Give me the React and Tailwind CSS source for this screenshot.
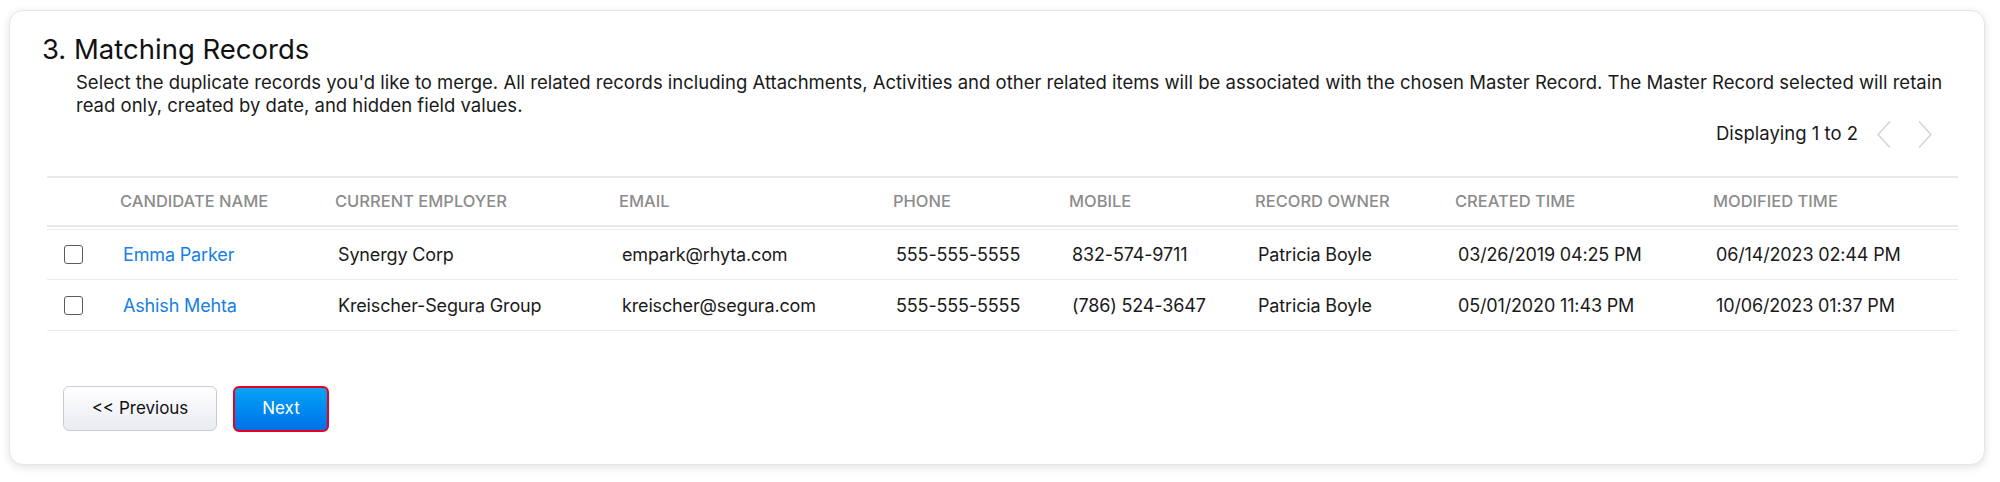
import React from "react";

const cols = "grid-cols-[73px_215px_284px_274px_176px_186px_200px_258px_245px]";

const headers = [
  "CANDIDATE NAME",
  "CURRENT EMPLOYER",
  "EMAIL",
  "PHONE",
  "MOBILE",
  "RECORD OWNER",
  "CREATED TIME",
  "MODIFIED TIME",
];

const rows = [
  ["Emma Parker", "Synergy Corp", "empark@rhyta.com", "555-555-5555", "832-574-9711", "Patricia Boyle", "03/26/2019 04:25 PM", "06/14/2023 02:44 PM"],
  ["Ashish Mehta", "Kreischer-Segura Group", "kreischer@segura.com", "555-555-5555", "(786) 524-3647", "Patricia Boyle", "05/01/2020 11:43 PM", "10/06/2023 01:37 PM"],
];

function Chevron({ dir }) {
  return (
    <svg width="14" height="27" viewBox="0 0 14 27" fill="none" stroke="#d2d2d2" strokeWidth="1.4">
      {dir === "left" ? <path d="M13 0.5 L1 13.5 L13 26.5" /> : <path d="M1 0.5 L13 13.5 L1 26.5" />}
    </svg>
  );
}

export default function App() {
  return (
    <div className="bg-white w-[2000px] h-[482px] pt-[10px] pl-[9px] font-['Inter',sans-serif]">
      <div className="w-[1976px] h-[455px] bg-white rounded-[14px] border border-[#e6e6e6] shadow-[0_2px_8px_rgba(0,0,0,0.12)] pt-[21px] pl-[32px] pr-[26px]">
        <h2 className="text-[27.5px] leading-[34px] text-[#111] font-normal">3. Matching Records</h2>
        <p className="mt-[5px] ml-[34px] text-[18.5px] leading-[23px] text-[#1a1a1a] pr-[8px]">
          Select the duplicate records you'd like to merge. All related records including Attachments, Activities and other related items will be associated with the chosen Master Record. The Master Record selected will retain read only, created by date, and hidden field values.
        </p>
        <div className="flex justify-end items-center mt-[5px] h-[24px] pr-[26px]">
          <span className="text-[18.5px] text-[#1a1a1a] mr-[19px]">Displaying 1 to 2</span>
          <Chevron dir="left" />
          <div className="w-[27px]" />
          <Chevron dir="right" />
        </div>
        <div className="mt-[30px] ml-[5px] w-[1911px]">
          <div className={`grid ${cols} h-[51px] items-center border-t-2 border-b-2 border-[#e8e8e8]`}>
            <div />
            {headers.map((h) => (
              <div key={h} className="text-[16.5px] font-medium text-[#8c8c8c]">{h}</div>
            ))}
          </div>
          {rows.map((r, i) => (
            <div key={i} className={`grid ${cols} h-[51px] items-center border-b border-[#ececec] ${i === 0 ? "border-t mt-[2px]" : ""}`}>
              <div className="pl-[17px]">
                <div className="w-[19px] h-[19px] border-[1.5px] border-[#555b6a] rounded-[3px] bg-white" />
              </div>
              {r.map((c, j) => (
                <div key={j} className={`pl-[3px] text-[18px] tracking-[-0.15px] ${j === 0 ? "text-[#1580e6]" : "text-[#1a1a1a]"}`}>{c}</div>
              ))}
            </div>
          ))}
        </div>
        <div className="flex gap-[16px] mt-[55px] ml-[21px]">
          <button className="w-[154px] h-[45px] rounded-[6px] border border-[#c9cdd8] bg-gradient-to-b from-[#ffffff] to-[#e9ebf2] text-[17px] text-[#111]">
            &lt;&lt; Previous
          </button>
          <button className="w-[96px] h-[46px] rounded-[6px] border-2 border-[#e8001e] bg-gradient-to-b from-[#0aa3f5] to-[#0070e8] text-[17px] text-white">
            Next
          </button>
        </div>
      </div>
    </div>
  );
}
